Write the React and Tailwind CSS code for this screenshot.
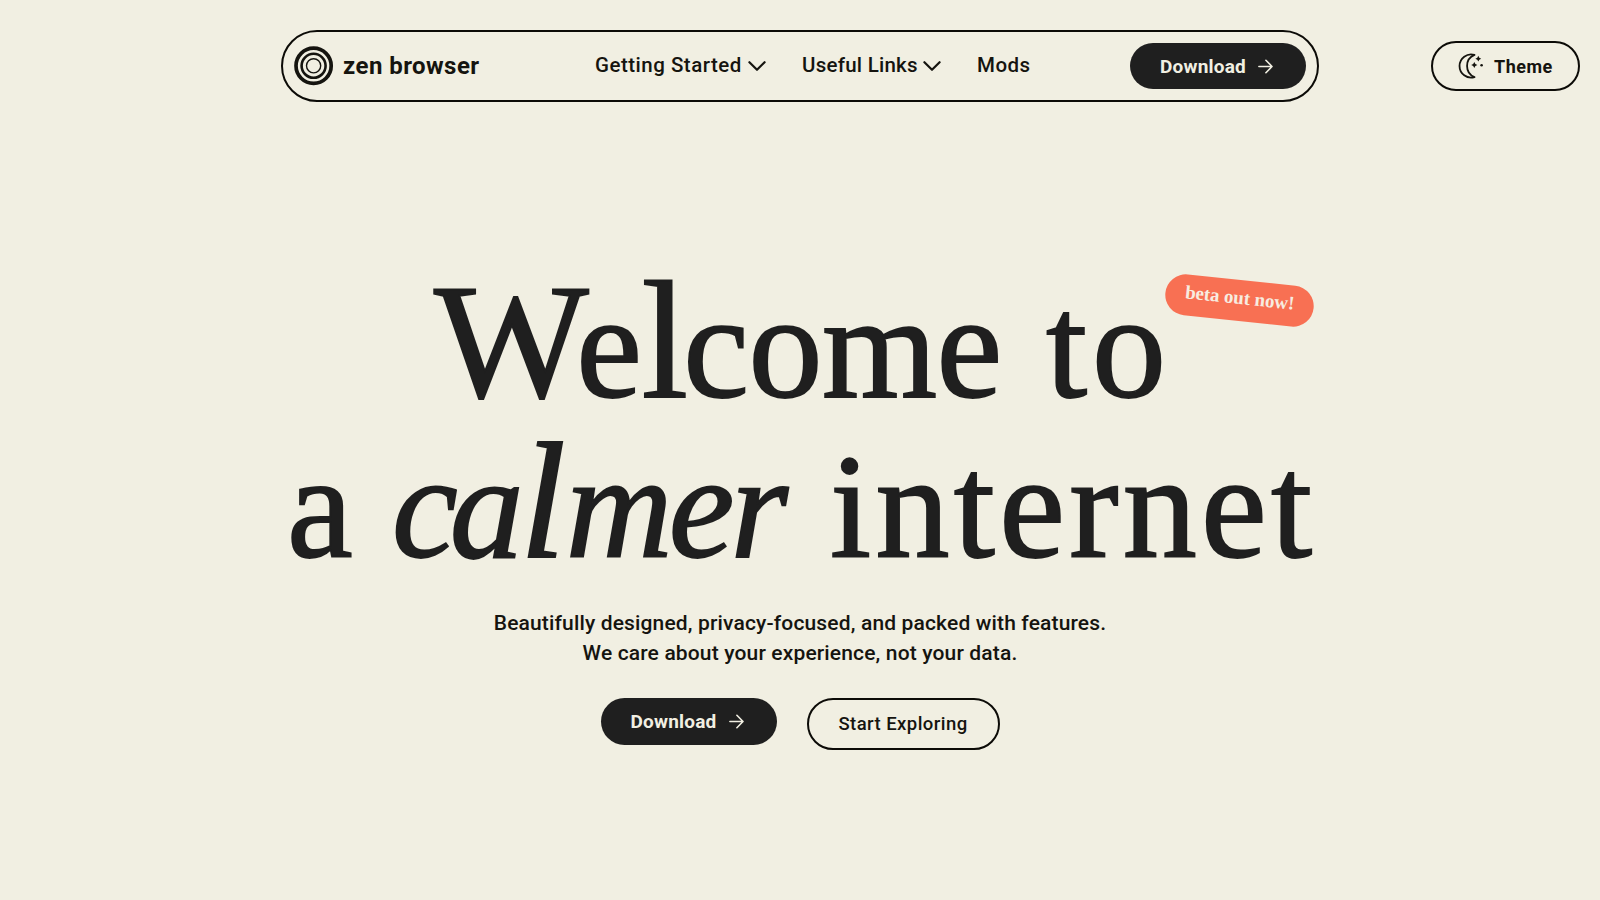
import React from "react";

function Logo() {
  return (
    <svg className="size-10 shrink-0" viewBox="0 0 40 40" fill="none" stroke="#15140f">
      <circle cx="19.6" cy="19.8" r="17.6" strokeWidth="3.7" />
      <circle cx="19.6" cy="19.8" r="12" strokeWidth="2.6" />
      <circle cx="19.6" cy="19.8" r="7.1" strokeWidth="1.4" />
    </svg>
  );
}

function Chevron() {
  return (
    <svg className="h-[10px] w-[18px] shrink-0" viewBox="0 0 18 10" fill="none" stroke="#15140f" strokeWidth="2.2" strokeLinecap="round" strokeLinejoin="round">
      <path d="M1.4 1.2 9 8.8l7.6-7.6" />
    </svg>
  );
}

function Arrow() {
  return (
    <svg className="size-[15px] shrink-0" viewBox="0 0 15 15" fill="none" stroke="#f1efe2" strokeWidth="1.6" strokeLinecap="round" strokeLinejoin="round">
      <path d="M.9 7.5h13M7.9 1.3l6.1 6.2-6.1 6.2" />
    </svg>
  );
}

function MoonStars() {
  return (
    <svg className="size-[26px] shrink-0" viewBox="0 0 26 26" fill="none" stroke="#15140f" strokeWidth="1.8" strokeLinejoin="round">
      <path d="M17.5 1.9A11.6 11.6 0 1 0 17.5 24.1 12 12 0 0 1 17.5 1.9Z" />
      <g fill="#15140f" stroke="none">
        <path d="M21.3 2.8l1 1.9 1.9 1-1.9 1-1 1.9-1-1.9-1.9-1 1.9-1z" />
        <path d="M17.3 8.9l1.1 2 2 1.1-2 1.1-1.1 2-1.1-2-2-1.1 2-1.1z" />
        <circle cx="24.6" cy="12.3" r="1.3" />
      </g>
    </svg>
  );
}

function DownloadButton({ className }) {
  return (
    <button className={"flex w-[176px] items-center rounded-full bg-[#1f1f1f] pl-[30px] text-[19px] leading-none font-bold text-[#f1efe2] " + className}>
      <span className="w-[98px] text-left tracking-[0.2px]">Download</span>
      <Arrow />
    </button>
  );
}

export default function App() {
  return (
    <div className="h-[900px] w-[1600px] overflow-hidden bg-[#f1efe2] font-['Roboto',sans-serif] text-[#15140f]">
      <header className="flex items-start pl-[281px] pt-[30px]">
        <nav className="flex h-[72px] w-[1038px] items-center rounded-full border-2 border-[#0c0b07] pl-[11px] pr-[11px]">
          <Logo />
          <span className="ml-[9px] w-[252px] text-[24px] leading-none font-bold tracking-[0.45px] whitespace-nowrap">zen browser</span>
          <div className="flex items-center text-[20.5px] leading-none font-medium whitespace-nowrap">
            <span className="w-[153px] pb-px tracking-[0.5px]">Getting Started</span>
            <Chevron />
            <span className="ml-[36px] w-[121px] pb-px tracking-[0.25px]">Useful Links</span>
            <Chevron />
            <span className="ml-[36px] pb-px tracking-[0.5px]">Mods</span>
          </div>
          <DownloadButton className="ml-auto h-[46px]" />
        </nav>
        <button className="mt-[11px] ml-[112px] flex h-[50px] w-[149px] items-center rounded-full border-2 border-[#0c0b07] pl-[24px] text-[18px] font-bold">
          <MoonStars />
          <span className="ml-[11px] tracking-[0.5px]">Theme</span>
        </button>
      </header>

      <main className="flex flex-col items-center pt-[165px]">
        <h1 className="w-[1038px] font-['Liberation_Serif',serif] text-[148px] leading-[160px] text-[#1f1f1f] [-webkit-text-stroke:1.8px_#1f1f1f]">
          <span className="relative flex h-[160px] pl-[153px] whitespace-nowrap">
            <span className="w-[612px] tracking-[-0.5px]">
              <span className="mr-[-12px] text-[164px] leading-[100px]">W</span>e<span className="text-[168px] leading-[100px] tracking-[-5px]">l</span>come
            </span>
            <span className="tracking-[5px]">to</span>
            <span className="absolute top-[13px] left-[884px] flex h-[41px] w-[149px] rotate-6 justify-center rounded-full bg-[#f87053] pt-[8px] text-[19px] leading-[20px] font-bold tracking-[-0.1px] text-[#f7ece0] [-webkit-text-stroke:0px]">
              beta out now!
            </span>
          </span>
          <span className="flex h-[160px] pl-[6px] whitespace-nowrap">
            <span className="w-[105px]">a</span>
            <em className="w-[438px] tracking-[-4px]">
              <span className="tracking-[-8px]">c</span>a<span className="text-[166px] leading-[100px] tracking-[0px]">l</span>mer
            </em>
            <span className="tracking-[4.3px]">internet</span>
          </span>
        </h1>
        <p className="mt-[21px] text-center text-[21px] leading-[30px] font-medium tracking-[0.15px]">
          Beautifully designed, privacy-focused, and packed with features.
          <br />
          We care about your experience, not your data.
        </p>
        <div className="mt-[30px] flex w-[399px] items-start justify-between text-[18.5px]">
          <DownloadButton className="h-[47px]" />
          <button className="h-[52px] w-[193px] rounded-full border-2 border-[#0c0b07] pt-[2px] font-medium tracking-[0.45px]">Start Exploring</button>
        </div>
      </main>
    </div>
  );
}
